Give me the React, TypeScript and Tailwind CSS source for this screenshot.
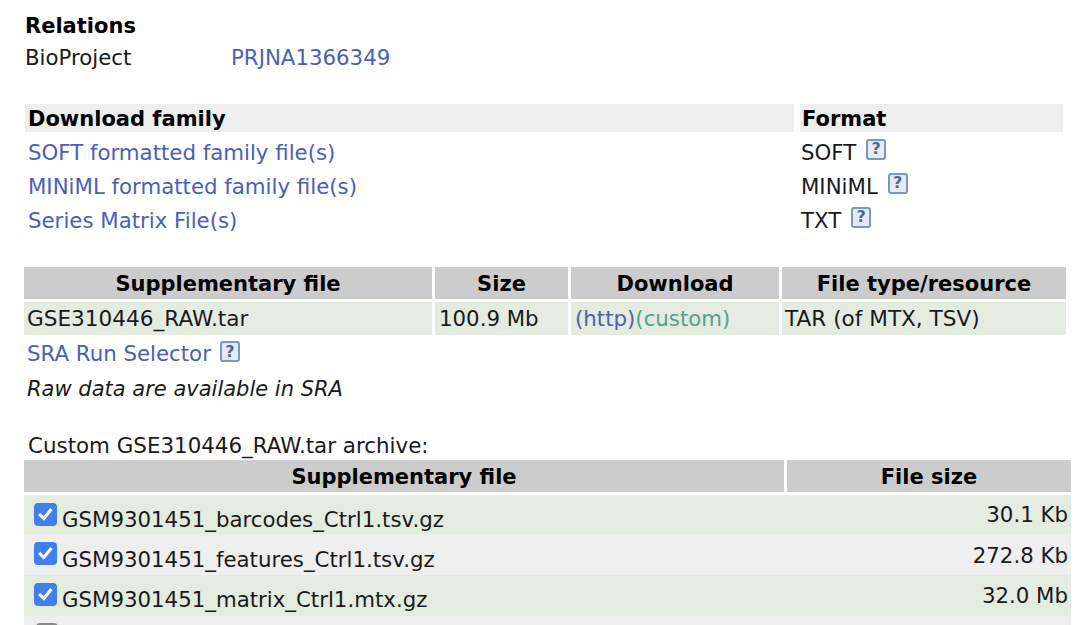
const font = "font-['DejaVu_Sans','Verdana',sans-serif]";

function Help({ className = "" }: { className?: string }) {
  return (
    <span className={`inline-flex h-[21px] w-[20px] items-center justify-center rounded-[3px] border-2 border-[#7d96bf] bg-[#e4ebf5] text-[16px] font-bold leading-none text-[#52698f] ${className}`}>
      ?
    </span>
  );
}

function Check({ checked = true, className = "" }: { checked?: boolean; className?: string }) {
  return checked ? (
    <span className={`flex h-[23px] w-[23px] shrink-0 items-center justify-center rounded-[4px] bg-[#3f7ff0] ${className}`}>
      <svg viewBox="0 0 16 16" className="h-[19px] w-[19px]" fill="none" stroke="#fff" strokeWidth="2.6" strokeLinecap="square">
        <path d="M3.6 8.4 6.6 11.4 12.2 4.4" />
      </svg>
    </span>
  ) : (
    <span className={`block h-[22px] w-[22px] shrink-0 rounded-[4px] border-2 border-[#8a8a8a] bg-white ${className}`} />
  );
}

const familyRows = [
  { name: "SOFT formatted family file(s)", format: "SOFT" },
  { name: "MINiML formatted family file(s)", format: "MINiML" },
  { name: "Series Matrix File(s)", format: "TXT" },
];

const customRows = [
  { name: "GSM9301451_barcodes_Ctrl1.tsv.gz", size: "30.1 Kb", bg: "bg-[#e3ecdf]", h: "h-[39px]", nameTop: "mt-[9px]", sizeTop: "mt-[4px]" },
  { name: "GSM9301451_features_Ctrl1.tsv.gz", size: "272.8 Kb", bg: "bg-[#eeeeee]", h: "h-[41px]", nameTop: "mt-[10px]", sizeTop: "mt-[6px]" },
  { name: "GSM9301451_matrix_Ctrl1.mtx.gz", size: "32.0 Mb", bg: "bg-[#e3ecdf]", h: "h-[41px]", nameTop: "mt-[9px]", sizeTop: "mt-[5px]" },
];

export default function App() {
  return (
    <div className={`${font} h-[625px] w-[1080px] overflow-hidden bg-white text-[21.3px] leading-[32px] text-[#1a1a1a]`}>
      <div className="pl-[25px] pt-[10px]">
        <div className="text-[21px] font-bold text-black">Relations</div>
        <div className="flex h-[30px] items-center pt-[2px]">
          <span className="w-[206px]">BioProject</span>
          <a className="text-[#4a60b8]">PRJNA1366349</a>
        </div>
      </div>

      <div className="ml-[25px] mt-[32px] grid w-[1038px] grid-cols-[769px_263px] gap-x-[6px] leading-[42px]">
        <div className="h-[28px] bg-[#eeeeee] pl-[3px] text-[21px] font-bold leading-[30px] text-black">Download family</div>
        <div className="h-[28px] bg-[#eeeeee] pl-[2px] text-[21px] font-bold leading-[30px] text-black">Format</div>
        {familyRows.map((r) => (
          <div key={r.name} className="contents">
            <div className="h-[34px] pl-[3px] text-[#4a60b8]">{r.name}</div>
            <div className="flex h-[34px] items-center gap-[10px] pl-[1px] pt-[7px]">
              <span>{r.format}</span>
              <Help className="-mt-[7px]" />
            </div>
          </div>
        ))}
      </div>

      <div className="ml-[24px] mt-[33px] grid w-[1042px] grid-cols-[408px_133px_208px_284px] gap-x-[3px] gap-y-[3px]">
        {["Supplementary file", "Size", "Download", "File type/resource"].map((h) => (
          <div key={h} className="flex h-[32px] items-center justify-center bg-[#cccccc] pt-[2px] text-[21px] font-bold text-black">{h}</div>
        ))}
        <div className="flex h-[33px] items-center bg-[#e3ecdf] pl-[3px] text-[21.6px]">GSE310446_RAW.tar</div>
        <div className="flex h-[33px] items-center bg-[#e3ecdf] pl-[4px]">100.9 Mb</div>
        <div className="flex h-[33px] items-center bg-[#e3ecdf] pl-[4px]">
          <a className="text-[#4a60b8]">(http)</a>
          <a className="text-[#55a08c]">(custom)</a>
        </div>
        <div className="flex h-[33px] items-center bg-[#e3ecdf] pl-[3px] text-[21.6px]">TAR (of MTX, TSV)</div>
      </div>

      <div className="ml-[27px] mt-[1px] flex h-[36px] items-center gap-[9px]">
        <a className="text-[#4a60b8]">SRA Run Selector</a>
        <Help className="-mt-[5px]" />
      </div>
      <div className="ml-[27px] h-[33px] text-[21px] italic leading-[34px]">Raw data are available in SRA</div>

      <div className="ml-[28px] mt-[24px] h-[31px] text-[21.4px] leading-[34px]">Custom GSE310446_RAW.tar archive:</div>

      <div className="ml-[24px] w-[1047px]">
        <div className="grid grid-cols-[760px_284px] gap-x-[3px]">
          <div className="flex h-[32px] items-center justify-center bg-[#cccccc] pt-[2px] text-[21px] font-bold text-black">Supplementary file</div>
          <div className="flex h-[32px] items-center justify-center bg-[#cccccc] pt-[2px] text-[21px] font-bold text-black">File size</div>
        </div>
        <div className="mt-[3px]">
          {customRows.map((r) => (
            <div key={r.name} className={`flex ${r.h} ${r.bg} pl-[10px] pr-[3px]`}>
              <Check className="mt-[8px]" />
              <span className={`ml-[5px] ${r.nameTop}`}>{r.name}</span>
              <span className={`ml-auto ${r.sizeTop}`}>{r.size}</span>
            </div>
          ))}
          <div className="h-[40px] bg-[#eeeeee] pl-[12px] pt-[7px]">
            <Check checked={false} />
          </div>
        </div>
      </div>
    </div>
  );
}
